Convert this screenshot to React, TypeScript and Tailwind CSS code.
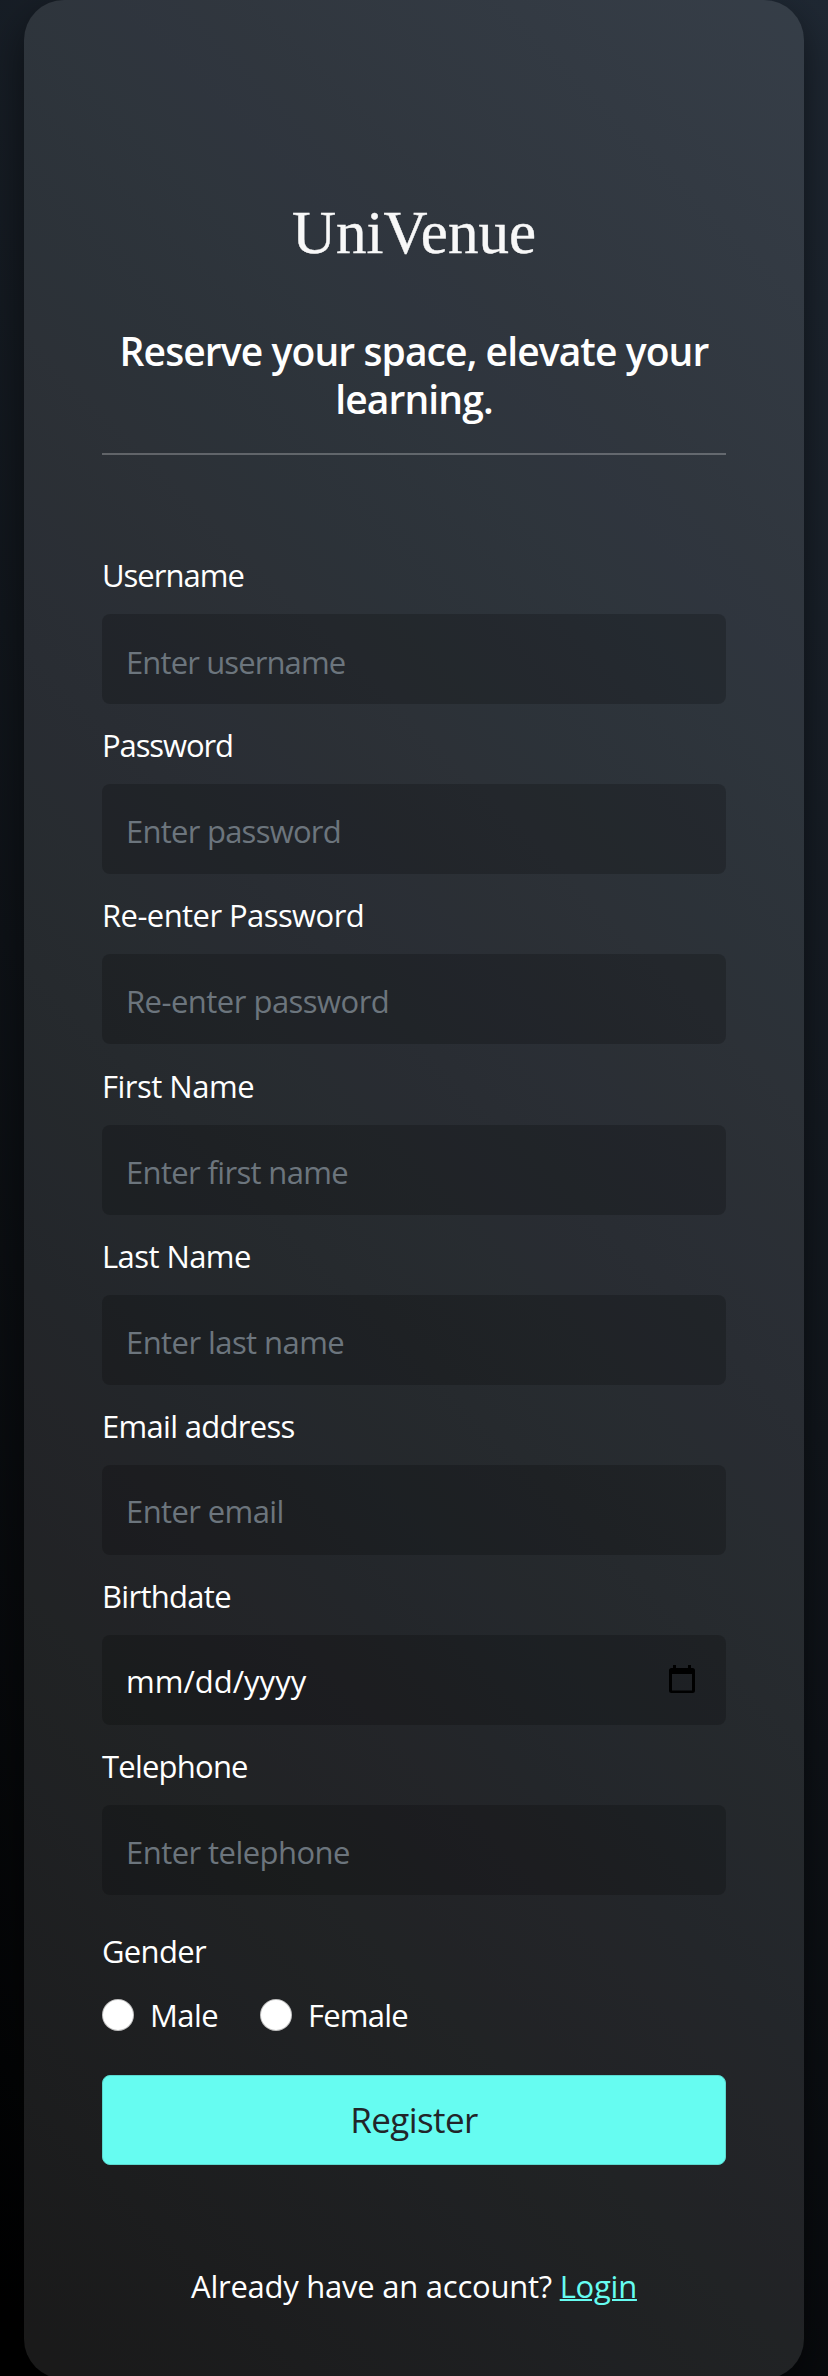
import React from "react";

const fields = [
  { label: "Username", placeholder: "Enter username", type: "text", lt: "tracking-[-1px]", pt: "pt-[5px] tracking-[-0.88px]" },
  { label: "Password", placeholder: "Enter password", type: "password", lt: "tracking-[-1.1px]", pt: "pt-[3px] tracking-[-0.75px]" },
  { label: "Re-enter Password", placeholder: "Re-enter password", type: "password", lt: "tracking-[-0.57px]", pt: "pt-[3px] tracking-[-0.52px]" },
  { label: "First Name", placeholder: "Enter first name", type: "text", lt: "tracking-[-0.5px]", pt: "pt-[4px] tracking-[-0.66px]" },
  { label: "Last Name", placeholder: "Enter last name", type: "text", lt: "tracking-[-0.58px]", pt: "pt-[4px] tracking-[-0.57px]" },
  { label: "Email address", placeholder: "Enter email", type: "email", lt: "tracking-[-0.69px]", pt: "pt-[2px] tracking-[-0.6px]" },
  { label: "Birthdate", placeholder: "mm/dd/yyyy", type: "date", lt: "tracking-[-0.7px]", pt: "pt-[2px] tracking-normal" },
  { label: "Telephone", placeholder: "Enter telephone", type: "tel", lt: "tracking-[-0.78px]", pt: "pt-[3px] tracking-[-0.55px]" },
];

function CalendarIcon() {
  return (
    <svg width="26" height="28" viewBox="0 0 26 28" className="mb-0.5 shrink-0">
      <path
        fillRule="evenodd"
        fill="#000"
        d="M4 0h3v3h12V0h3v3h1.500a2.500 2.500 0 0 1 2.500 2.500v20a2.500 2.500 0 0 1-2.500 2.500h-21a2.500 2.500 0 0 1-2.500-2.500v-20A2.500 2.500 0 0 1 2.500 3H4zM3 9v16.500h20V9z"
      />
    </svg>
  );
}

export default function App() {
  return (
    <div className="h-[2376px] overflow-hidden bg-[linear-gradient(45deg,#000000,#1f2833)] px-6 font-['Open_Sans','Noto_Sans',sans-serif] text-[31px] leading-[48px] text-white">
      <main className="flex h-[2379px] flex-col rounded-[40px] bg-white/10 px-[78px] shadow-[0_16px_40px_rgba(0,0,0,0.5)]">
        <h1 className="mt-[197px] text-center font-['Liberation_Serif',serif] text-[61px] leading-[72px] text-[#f8f8f8] [-webkit-text-stroke:0.4px_#f8f8f8]">
          UniVenue
        </h1>
        <h2 className="-mx-4 mt-[58px] text-center text-[39px] leading-[48px] font-semibold tracking-[-0.9px]">
          Reserve your space, elevate your
          <br />
          learning.
        </h2>
        <hr className="mt-[30px] border-t-2 border-white/25" />
        <form className="mt-[95px] flex flex-col">
          {fields.map((f) => (
            <div key={f.label} className="h-[170.2px]">
              <label className={`block h-[64px] pt-px ${f.lt}`}>{f.label}</label>
              {f.type === "date" ? (
                <div className="flex h-[90px] items-center justify-between rounded-lg bg-black/20 pr-[31px] pl-6">
                  <span className={f.pt}>{f.placeholder}</span>
                  <CalendarIcon />
                </div>
              ) : (
                <input
                  type={f.type}
                  placeholder={f.placeholder}
                  className={`block h-[90px] w-full rounded-lg bg-black/20 px-6 placeholder:text-[#6c757d] ${f.pt}`}
                />
              )}
            </div>
          ))}
          <div className="mt-[15px] tracking-[-0.67px]">Gender</div>
          <div className="mt-[16px] flex items-center tracking-[-0.6px]">
            <span className="mr-4 size-8 rounded-full border border-black/25 bg-white" />
            <span className="w-[110px]">Male</span>
            <span className="mr-4 size-8 rounded-full border border-black/25 bg-white" />
            <span className="tracking-[-0.8px]">Female</span>
          </div>
          <button className="mt-[36px] h-[90px] rounded-lg border border-[#5ad9cf] bg-[#66fcf1] text-[35px] tracking-[-0.6px] text-[#212529]">
            Register
          </button>
        </form>
        <p className="mt-[97px] text-center tracking-[-0.25px]">
          Already have an account? <a className="text-[#66fcf1] underline decoration-2">Login</a>
        </p>
      </main>
    </div>
  );
}
